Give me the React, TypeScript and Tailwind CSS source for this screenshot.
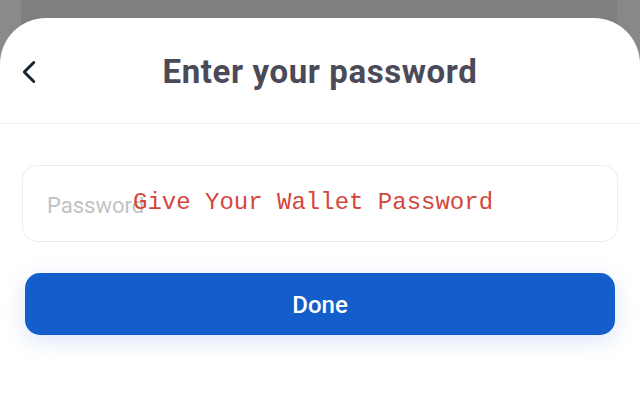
import { ChevronLeft } from "lucide-react";

export default function App() {
  return (
    <div className="flex h-[420px] w-[640px] flex-col overflow-hidden bg-[linear-gradient(90deg,#8a8a8a_0,#8a8a8a_21px,#7f7f7f_21px,#7f7f7f_617px,#888888_617px)] font-['Roboto',sans-serif]">
      <div className="mt-[18px] flex flex-1 flex-col rounded-t-[46px] bg-white">
        <header className="grid h-[105px] grid-cols-[64px_1fr_64px] items-center pt-[2px]">
          <button className="flex items-center pl-[10px] text-[#1b2434]">
            <ChevronLeft size={38} strokeWidth={1.9} />
          </button>
          <h1 className="text-center text-[33px] font-bold tracking-[0.6px] text-[#4a4a58]">
            Enter your password
          </h1>
          <div />
        </header>
        <div className="h-px bg-[#f3f3f3]" />
        <div className="flex flex-1 flex-col bg-white px-[22px] pt-[41px]">
          <div className="relative flex h-[77px] items-center rounded-[15px] border border-[#ebebeb] bg-white px-[24px]">
            <input
              type="password"
              placeholder="Password"
              className="w-full bg-transparent pt-[4px] text-[22px] text-[#333] outline-none placeholder:text-[#c2c2c2]"
            />
            <span className="pointer-events-none absolute left-[110px] top-[23px] font-['Liberation_Mono',monospace] text-[24px] leading-[28px] text-[#d4463b]">
              Give Your Wallet Password
            </span>
          </div>
          <button className="mx-[3px] mt-[31px] flex h-[62px] items-center justify-center rounded-[15px] bg-[#145ecb] pt-[2px] text-[24px] font-medium text-white shadow-[0_6px_22px_rgba(40,90,220,0.16)]">
            Done
          </button>
        </div>
      </div>
    </div>
  );
}
